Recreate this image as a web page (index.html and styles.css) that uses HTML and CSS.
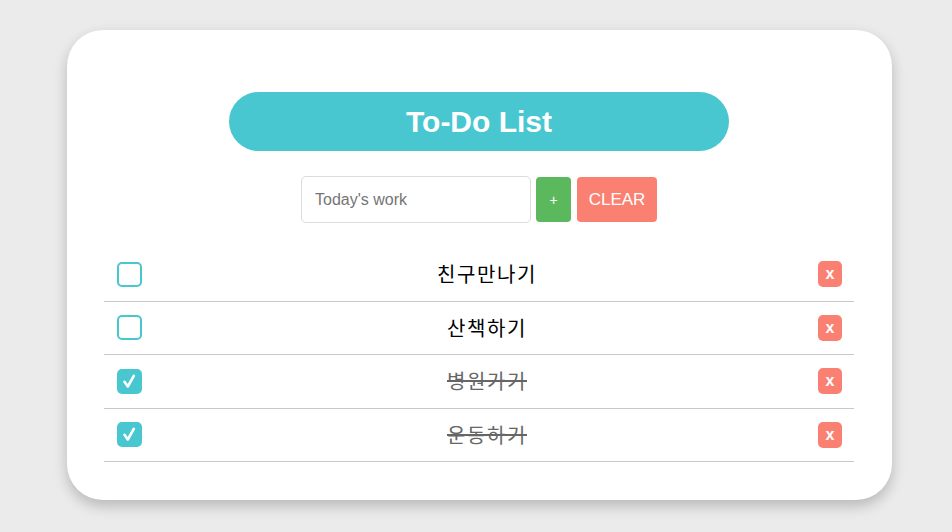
FILE: index.html
```html
<!DOCTYPE html>
<html lang="ko">
<head>
<meta charset="utf-8">
<title>To-Do List</title>
<link rel="stylesheet" href="styles.css">
</head>
<body>
<div class="card">
  <h1 class="title">To-Do List</h1>
  <div class="form">
    <input class="input" type="text" placeholder="Today's work">
    <button class="btn btn-add">+</button>
    <button class="btn btn-clear">CLEAR</button>
  </div>
  <ul class="list">
    <li class="item">
      <span class="check"></span>
      <span class="text">친구만나기</span>
      <button class="del">x</button>
    </li>
    <li class="item">
      <span class="check"></span>
      <span class="text">산책하기</span>
      <button class="del">x</button>
    </li>
    <li class="item done">
      <span class="check"><svg viewBox="0 0 25 25" width="25" height="25"><path d="M7.5 12.8 L10.8 17.5 L16.8 6.8" fill="none" stroke="#fff" stroke-width="2.6" stroke-linecap="round" stroke-linejoin="round"/></svg></span>
      <span class="text">병원가기</span>
      <button class="del">x</button>
    </li>
    <li class="item done">
      <span class="check"><svg viewBox="0 0 25 25" width="25" height="25"><path d="M7.5 12.8 L10.8 17.5 L16.8 6.8" fill="none" stroke="#fff" stroke-width="2.6" stroke-linecap="round" stroke-linejoin="round"/></svg></span>
      <span class="text">운동하기</span>
      <button class="del">x</button>
    </li>
  </ul>
</div>
</body>
</html>
```
FILE: styles.css
```css
html, body {
  margin: 0;
  padding: 0;
}
body {
  background: #ebebeb;
  font-family: "Liberation Sans", Arial, "Noto Sans CJK KR", sans-serif;
  padding: 30px 0 0 67px;
  height: 532px;
  box-sizing: border-box;
}
.card {
  width: 825px;
  height: 470px;
  box-sizing: border-box;
  background: #fff;
  border-radius: 36px;
  box-shadow: 0 6px 14px rgba(0, 0, 0, 0.22);
  padding: 62px 38px 0 37px;
  display: flex;
  flex-direction: column;
  align-items: center;
}
.title {
  margin: 0;
  width: 500px;
  height: 59px;
  border-radius: 30px;
  background: #48c7d0;
  color: #fff;
  font-size: 30px;
  font-weight: bold;
  display: flex;
  align-items: center;
  justify-content: center;
}
.form {
  margin-top: 25px;
  display: flex;
  align-items: center;
  gap: 5px;
}
.input {
  width: 230px;
  height: 47px;
  box-sizing: border-box;
  border: 1px solid #dcdcdc;
  border-radius: 5px;
  padding: 0 13px;
  font-family: "Liberation Sans", Arial, sans-serif;
  font-size: 16px;
  outline: none;
}
.input::placeholder {
  color: #757575;
}
.btn {
  height: 45px;
  border: none;
  border-radius: 4px;
  color: #fff;
  font-family: "Liberation Sans", Arial, sans-serif;
  padding: 0;
}
.btn-add {
  width: 35px;
  background: #5cb85c;
  font-size: 14px;
}
.btn-clear {
  width: 80px;
  margin-left: 1px;
  background: #fa8072;
  font-size: 17px;
}
.list {
  list-style: none;
  margin: 25px 0 0 0;
  padding: 0;
  align-self: stretch;
}
.item {
  height: 53.5px;
  box-sizing: border-box;
  border-bottom: 1px solid #c8c8c8;
  display: flex;
  align-items: center;
  padding: 0 12px 0 13px;
}
.check {
  width: 25px;
  height: 25px;
  box-sizing: border-box;
  border: 2px solid #48c7d0;
  border-radius: 5px;
  display: flex;
  align-items: center;
  justify-content: center;
  flex: none;
}
.done .check {
  background: #48c7d0;
  border: none;
}
.text {
  flex: 1;
  text-align: center;
  padding-left: 14px;
  font-family: "Noto Sans CJK KR", sans-serif;
  font-size: 20px;
  letter-spacing: 1.6px;
  color: #000;
  line-height: 1;
}
.done .text {
  text-decoration: line-through;
  color: #666;
}
.del {
  width: 24px;
  height: 26px;
  border: none;
  border-radius: 5px;
  background: #fa8072;
  color: #fff;
  font-family: "Liberation Sans", Arial, sans-serif;
  font-weight: bold;
  font-size: 16px;
  padding: 0;
  flex: none;
}
```
